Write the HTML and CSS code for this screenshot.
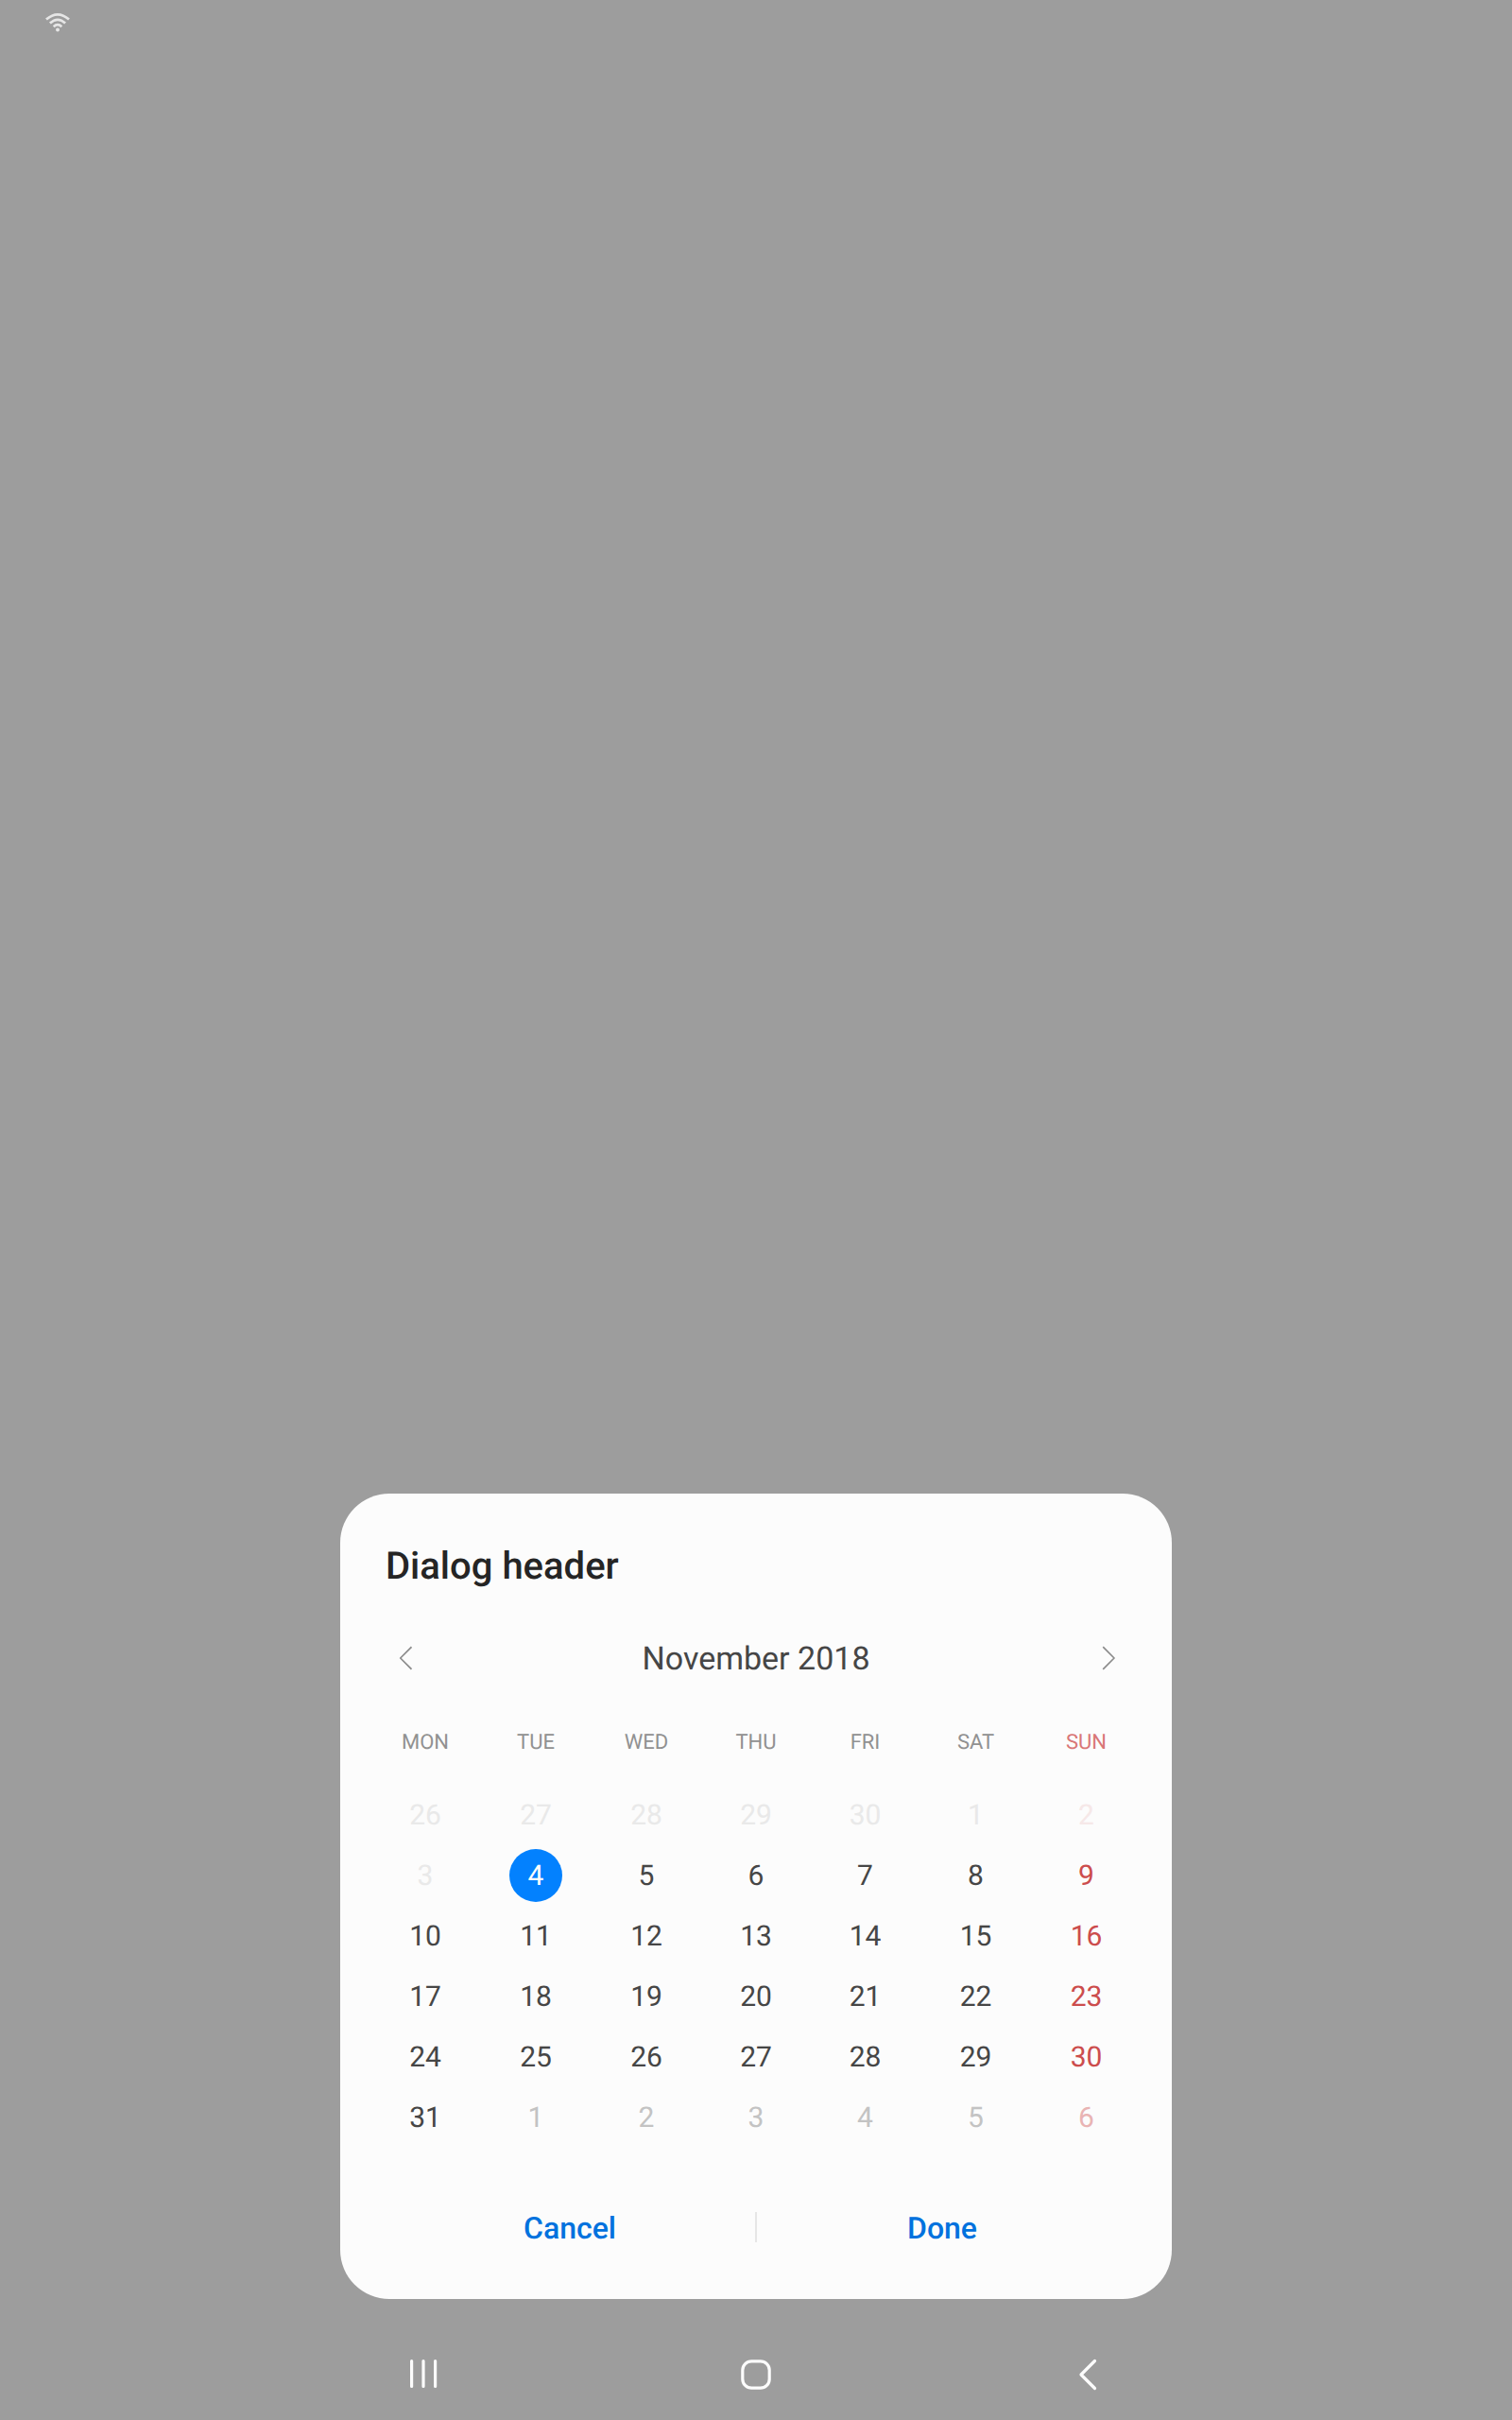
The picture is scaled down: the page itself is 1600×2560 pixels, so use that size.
FILE: index.html
```html
<!DOCTYPE html>
<html lang="en">
<head>
<meta charset="utf-8">
<title>Date picker</title>
<link rel="stylesheet" href="styles.css">
</head>
<body>
<div class="screen">
  <header class="status-bar">
    <svg class="wifi" width="28" height="22" viewBox="0 0 28 22" fill="none" stroke="#e6e6e6" stroke-width="2.7">
      <path d="M2 7.6Q14 -3 26 7.6"/>
      <path d="M5.9 11.6Q14 4 22.1 11.6"/>
      <path d="M9.7 15.2Q14 11.2 18.3 15.2"/>
      <circle cx="14" cy="18.4" r="2" fill="#e6e6e6" stroke="none"/>
    </svg>
  </header>
  <main class="dialog">
    <h1 class="title">Dialog header</h1>
    <div class="month-bar">
      <svg class="arrow" width="16" height="28" viewBox="0 0 16 28"><path d="M15.5 2.2L3.7 14L15.5 25.8"/></svg>
      <span class="month">November 2018</span>
      <svg class="arrow" width="16" height="28" viewBox="0 0 16 28"><path d="M3.2 2.2L15 14L3.2 25.8"/></svg>
    </div>
    <div class="grid weekdays">
      <span>MON</span><span>TUE</span><span>WED</span><span>THU</span><span>FRI</span><span>SAT</span><span class="sun">SUN</span>
    </div>
    <div class="grid days">
      <span class="past">26</span><span class="past">27</span><span class="past">28</span><span class="past">29</span><span class="past">30</span><span class="past">1</span><span class="sun past">2</span>
      <span class="past">3</span><span class="selected">4</span><span>5</span><span>6</span><span>7</span><span>8</span><span class="sun">9</span>
      <span>10</span><span>11</span><span>12</span><span>13</span><span>14</span><span>15</span><span class="sun">16</span>
      <span>17</span><span>18</span><span>19</span><span>20</span><span>21</span><span>22</span><span class="sun">23</span>
      <span>24</span><span>25</span><span>26</span><span>27</span><span>28</span><span>29</span><span class="sun">30</span>
      <span>31</span><span class="next">1</span><span class="next">2</span><span class="next">3</span><span class="next">4</span><span class="next">5</span><span class="sun next">6</span>
    </div>
    <div class="actions">
      <button class="action" type="button">Cancel</button>
      <i class="divider"></i>
      <button class="action" type="button">Done</button>
    </div>
  </main>
  <nav class="nav-bar">
    <svg width="32" height="34" viewBox="0 0 32 34"><path d="M3.6 2.6V29.5M16 2.6V29.5M28.6 2.6V29.5"/></svg>
    <svg width="36" height="36" viewBox="0 0 36 36"><rect x="3.8" y="3.8" width="28.4" height="28.4" rx="9.5"/></svg>
    <svg width="26" height="36" viewBox="0 0 26 36"><path d="M22.5 3.5L8 18L22.5 32.5"/></svg>
  </nav>
</div>
</body>
</html>
```

FILE: styles.css
```css
* {
  box-sizing: border-box;
}

body {
  margin: 0;
  background: #9d9d9d;
  font-family: Roboto, "Liberation Sans", sans-serif;
  text-rendering: geometricPrecision;
}

svg {
  display: block;
  flex: none;
}

.screen {
  width: 1600px;
  height: 2560px;
  display: flex;
  flex-direction: column;
}

.status-bar {
  height: 48px;
  padding: 13px 47px;
}

.dialog {
  width: 880px;
  height: 852px;
  margin: auto auto 0;
  padding-top: 49px;
  border-radius: 52px;
  background: #fcfcfc;
}

.title {
  margin: 0 48px;
  height: 56px;
  line-height: 56px;
  font-size: 40px;
  font-weight: 500;
  color: #252525;
}

.month-bar {
  height: 80px;
  margin-top: 29px;
  padding: 0 60px;
  display: flex;
  align-items: center;
  justify-content: space-between;
}

.month {
  padding-top: 2px;
  font-size: 34px;
  line-height: 40px;
  color: #464646;
}

.arrow {
  fill: none;
  stroke: #8c8c8c;
  stroke-width: 1.7;
  stroke-linejoin: round;
}

.grid {
  display: grid;
  grid-template-columns: 117px 117px 117px 115px 116px 118px 116px;
  padding-left: 31.5px;
  justify-items: center;
  align-items: center;
  text-align: center;
}

.weekdays {
  grid-auto-rows: 56px;
  margin-top: 20px;
  font-size: 22px;
  color: #919191;
}

.grid span {
  padding-top: 2px;
}

.weekdays .sun {
  color: #d97777;
}

.days {
  grid-auto-rows: 64px;
  margin-top: 18px;
  font-size: 30px;
  line-height: 56px;
  color: #464646;
}

.days .sun {
  color: #cc4d4d;
}

.days .past {
  color: #e9e9e9;
}

.days .sun.past {
  color: #f6e8e8;
}

.days .next {
  color: #c3c3c3;
}

.days .sun.next {
  color: #e9b4b4;
}

.days .selected {
  width: 56px;
  height: 56px;
  padding-top: 1px;
  border-radius: 50%;
  background: #0381fe;
  color: #fcfcfc;
}

.actions {
  height: 72px;
  margin: 48px 47px 0;
  display: flex;
  align-items: center;
  justify-content: center;
}

.action {
  width: 392px;
  height: 72px;
  padding: 2px 0 0;
  border: 0;
  background: none;
  font: 500 32px/70px Roboto, "Liberation Sans", sans-serif;
  text-rendering: inherit;
  color: #0072de;
}

.divider {
  width: 2px;
  height: 32px;
  background: #e6e6e6;
}

.nav-bar {
  height: 128px;
  padding: 32px 438px 0 432px;
  display: flex;
  align-items: center;
  justify-content: space-between;
  fill: none;
  stroke: #fcfcfc;
  stroke-width: 3.2;
  stroke-linecap: round;
  stroke-linejoin: round;
}
```
